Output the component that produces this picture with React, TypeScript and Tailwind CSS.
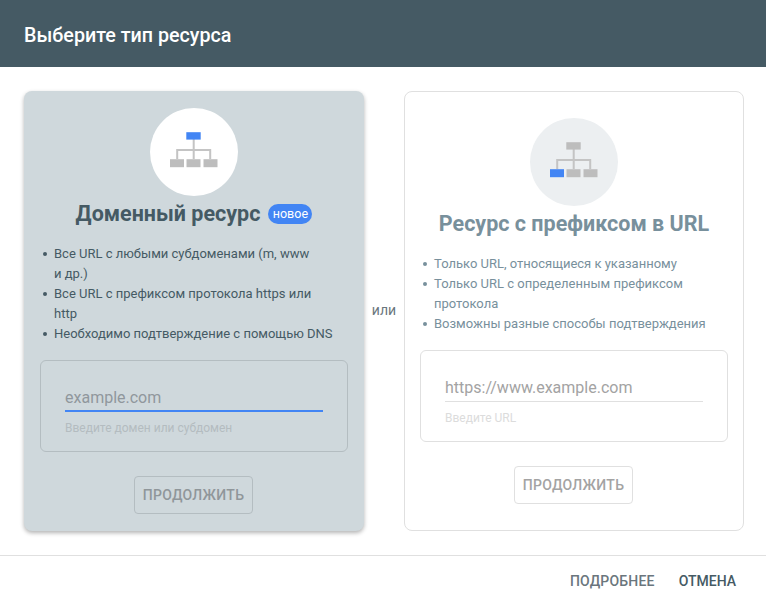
const font = { fontFamily: "Roboto, sans-serif" };

function SiteIcon({ blue }: { blue: "top" | "left" }) {
  return (
    <svg width="48" height="40" viewBox="0 0 48 40">
      <path d="M23.7 7v20M7.2 27v-9h33v9" fill="none" stroke="#c4c4c4" strokeWidth="2" />
      <rect x="16.3" y="0.2" width="14.4" height="7.4" fill={blue === "top" ? "#4285f4" : "#bdbdbd"} />
      <rect x="0" y="27.2" width="14" height="8" fill={blue === "left" ? "#4285f4" : "#bdbdbd"} />
      <rect x="16.5" y="27.2" width="14" height="8" fill="#bdbdbd" />
      <rect x="33.5" y="27.2" width="14" height="8" fill="#bdbdbd" />
    </svg>
  );
}

function Bullet({ children, dot }: { children: React.ReactNode; dot: string }) {
  return (
    <li className="flex">
      <span className={`mt-2 ml-[3px] mr-[7px] h-1 w-1 shrink-0 rounded-full ${dot}`} />
      <span>{children}</span>
    </li>
  );
}

function LeftCard() {
  return (
    <div className="flex w-[340px] shrink-0 flex-col rounded-lg bg-[#cfd8dc] px-4 pt-[17px] pb-[17px] shadow-[0_2px_4px_rgba(0,0,0,0.3)]">
      <div className="flex h-[88px] w-[88px] items-center justify-center self-center rounded-full bg-white">
        <SiteIcon blue="top" />
      </div>
      <div className="flex h-9 items-center justify-center gap-2">
        <span className="text-[21.5px] font-bold text-[#455a64]">Доменный ресурс</span>
        <span className="flex h-5 w-11 items-center justify-center rounded-[10px] bg-[#4285f4] text-[12.5px] text-white">новое</span>
      </div>
      <ul className="mt-3 w-[296px] text-[13px] leading-5 text-[#455a64]">
        <Bullet dot="bg-[#455a64]">Все URL с любыми субдоменами (m, www и&nbsp;др.)</Bullet>
        <Bullet dot="bg-[#455a64]">Все URL с префиксом протокола https или http</Bullet>
        <Bullet dot="bg-[#455a64]">Необходимо подтверждение с помощью DNS</Bullet>
      </ul>
      <div className="mt-4 h-[92px] rounded-md border border-[#b4bdc1] px-6 pt-[23px]">
        <input
          readOnly
          placeholder="example.com"
          className="block h-[28px] w-full border-b-2 border-[#4285f4] bg-transparent text-[16px] outline-none placeholder:text-[#90979c]"
        />
        <div className="mt-2 text-[12px] leading-4 text-[#b4bcc0]">Введите домен или субдомен</div>
      </div>
      <button className="mt-6 ml-[94px] h-[38px] w-[119px] rounded border border-[#b4bdc1] text-[14px] font-medium tracking-[0.3px] text-[#8f969a]">
        ПРОДОЛЖИТЬ
      </button>
    </div>
  );
}

function RightCard() {
  return (
    <div className="flex w-[340px] shrink-0 flex-col items-start rounded-lg border border-[#e0e0e0] bg-white px-[15px] pt-[26px]">
      <div className="flex h-[88px] w-[88px] items-center justify-center self-center rounded-full bg-[#eceff1]">
        <SiteIcon blue="left" />
      </div>
      <div className="flex h-9 items-center justify-center self-stretch">
        <span className="text-[21.5px] font-bold text-[#78909c]">Ресурс с префиксом в URL</span>
      </div>
      <ul className="mt-3 w-[296px] text-[13px] leading-5 text-[#78909c]">
        <Bullet dot="bg-[#78909c]">Только URL, относящиеся к указанному</Bullet>
        <Bullet dot="bg-[#78909c]">Только URL с определенным префиксом протокола</Bullet>
        <Bullet dot="bg-[#78909c]">Возможны разные способы подтверждения</Bullet>
      </ul>
      <div className="mt-4 h-[92px] self-stretch rounded-md border border-[#e0e0e0] px-6 pt-[23px]">
        <input
          readOnly
          placeholder="https://www.example.com"
          className="block h-[28px] w-full border-b border-[#e0e0e0] bg-transparent text-[16px] outline-none placeholder:text-[#a3a3a3]"
        />
        <div className="mt-2 text-[12px] leading-4 text-[#dcdcdc]">Введите URL</div>
      </div>
      <button className="mt-6 ml-[94px] h-[38px] w-[119px] rounded border border-[#e0e0e0] text-[14px] font-medium tracking-[0.3px] text-[#a3a3a3]">
        ПРОДОЛЖИТЬ
      </button>
    </div>
  );
}

export default function App() {
  return (
    <div className="flex h-[608px] w-[766px] flex-col bg-white" style={font}>
      <div className="flex h-[67px] items-center bg-[#455a64] px-6 pt-1 text-[19.7px] font-medium text-white">
        Выберите тип ресурса
      </div>
      <div className="flex h-[488px] py-6 pl-6">
        <LeftCard />
        <div className="flex w-10 shrink-0 items-center justify-center pb-[2px] text-[14px] text-[#6a767d]">или</div>
        <RightCard />
      </div>
      <div className="flex flex-1 items-center justify-end gap-6 border-t border-[#e0e0e0] pr-[30px] pb-[1px] text-[14px] font-medium">
        <span className="tracking-[0.2px] text-[#6a767d]">ПОДРОБНЕЕ</span>
        <span className="text-[#455a64]">ОТМЕНА</span>
      </div>
    </div>
  );
}
